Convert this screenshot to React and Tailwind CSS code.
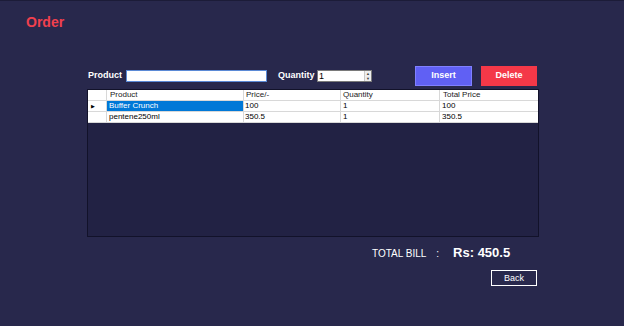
const rows = [
  { product: 'Buffer Crunch', price: '100', qty: '1', total: '100' },
  { product: 'pentene250ml', price: '350.5', qty: '1', total: '350.5' },
];

export default function App() {
  return (
    <div
      className="w-[624px] h-[326px] bg-[#28284c] border-t border-[#1c1c38] overflow-hidden"
      style={{ fontFamily: '"Liberation Sans", Arial, sans-serif' }}
    >
      {/* ── Title ─────────────────────────────────────────── */}
      <div className="pl-[26px] pt-[13px] h-[30px] text-[14px] font-bold text-[#f0404e] leading-[17px]">Order</div>

      {/* ── Controls ──────────────────────────────────────── */}
      <div className="flex items-center ml-[88px] mt-[35px] h-[20px]">
        <span className="w-[34px] text-[9px] font-bold text-white">Product</span>
        <input
          readOnly
          className="ml-[4px] w-[141px] h-[12px] bg-white border border-[#5b8ad6] outline-none"
        />
        <span className="ml-[11px] w-[35px] text-[9px] font-bold text-white">Quantity</span>
        <div className="ml-[4px] w-[55px] h-[12px] bg-white border border-[#7a7a7a] flex items-center">
          <span className="flex-1 text-[9px] leading-[10px] pl-[1px] text-black">1</span>
          <div className="w-[7px] h-full flex flex-col border-l border-[#c8c8c8] bg-[#eeeeee]">
            <div className="flex-1 flex items-center justify-center text-[4px] leading-[4px] text-[#444]">▲</div>
            <div className="flex-1 flex items-center justify-center text-[4px] leading-[4px] text-[#444]">▼</div>
          </div>
        </div>
        <button className="ml-[43px] w-[57px] h-[20px] bg-[#6060f4] border border-[#8080ff] text-white text-[9px] font-bold">Insert</button>
        <button className="ml-[9px] w-[56px] h-[20px] bg-[#f43848] text-white text-[9px] font-bold">Delete</button>
      </div>

      {/* ── Grid ──────────────────────────────────────────── */}
      <div className="ml-[87px] mt-[3px] w-[452px] h-[148px] bg-[#222244] border border-[#12122a]">
        <div className="bg-white text-[8px] leading-[10px] text-black">
          <div className="flex h-[11px] border-b border-[#d8d8d8]">
            <div className="w-[19px] border-r border-[#d8d8d8]" />
            <div className="w-[137px] pl-[3px] border-r border-[#d8d8d8] text-[#222]">Product</div>
            <div className="w-[97px] pl-[2px] border-r border-[#d8d8d8] text-[#222]">Price/-</div>
            <div className="w-[99px] pl-[2px] border-r border-[#d8d8d8] text-[#222]">Quantity</div>
            <div className="flex-1 pl-[3px] text-[#222]">Total Price</div>
          </div>
          {rows.map((r, i) => (
            <div key={i} className="flex h-[11px] border-b border-[#d8d8d8]">
              <div className="w-[19px] border-r border-[#d8d8d8] flex items-center pl-[3px]">
                {i === 0 && <span className="text-[5px] leading-[5px]">▶</span>}
              </div>
              <div
                className={
                  i === 0
                    ? 'w-[137px] pl-[2px] border-r border-[#d8d8d8] bg-[#0078d7] text-white'
                    : 'w-[137px] pl-[2px] border-r border-[#d8d8d8]'
                }
              >
                {r.product}
              </div>
              <div className="w-[97px] pl-[1px] border-r border-[#d8d8d8]">{r.price}</div>
              <div className="w-[99px] pl-[2px] border-r border-[#d8d8d8]">{r.qty}</div>
              <div className="flex-1 pl-[2px]">{r.total}</div>
            </div>
          ))}
        </div>
      </div>

      {/* ── Total ─────────────────────────────────────────── */}
      <div className="flex items-center ml-[372px] mt-[7px] h-[18px] text-white">
        <span className="text-[10px]">TOTAL BILL</span>
        <span className="ml-[10px] text-[10px]">:</span>
        <span className="ml-[14px] text-[13px] font-bold">Rs: 450.5</span>
      </div>

      {/* ── Back ──────────────────────────────────────────── */}
      <div className="flex justify-end mr-[87px] mt-[8px]">
        <button className="w-[46px] h-[16px] border border-white text-white text-[9px] leading-[12px] bg-transparent">Back</button>
      </div>
    </div>
  );
}
